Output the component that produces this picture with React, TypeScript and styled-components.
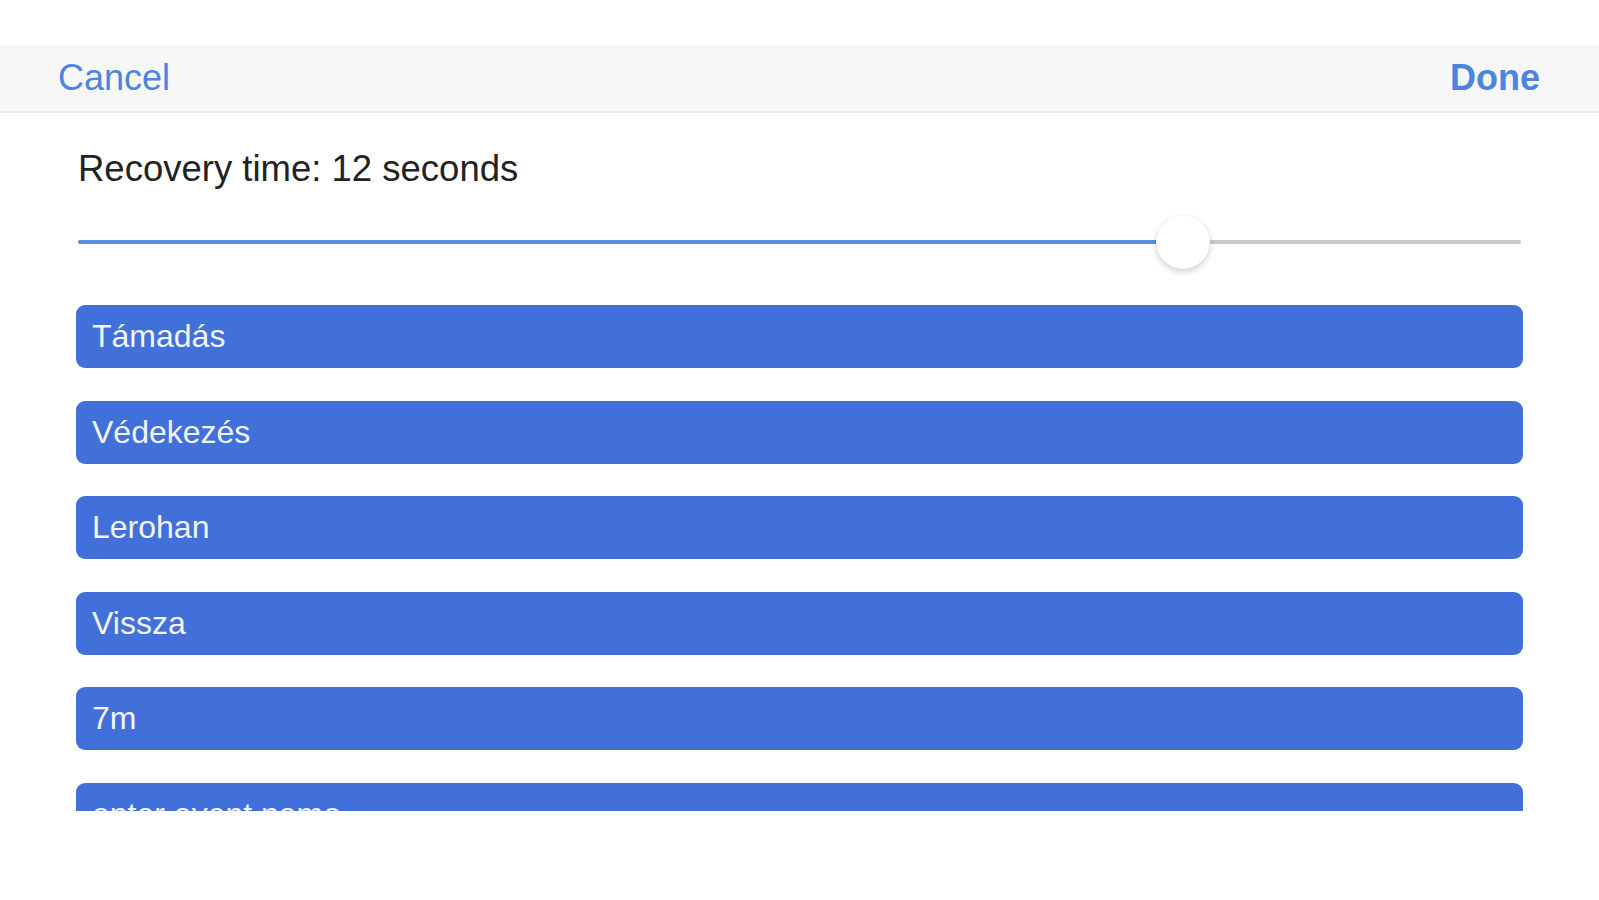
import React, { useState } from "react";
import styled, { createGlobalStyle } from "styled-components";

const GlobalStyle = createGlobalStyle`
    html, body {
        margin: 0;
        padding: 0;
        background: #ffffff;
        font-family: "Liberation Sans", Arial, sans-serif;
    }
`;

const Screen = styled.div`
    display: flex;
    flex-direction: column;
    width: 1599px;
    height: 900px;
    padding-top: 45px;
    box-sizing: border-box;
    background: #ffffff;
`;

const NavBar = styled.header`
    display: flex;
    align-items: center;
    justify-content: space-between;
    height: 66px;
    padding: 0 59px 0 58px;
    background: #f7f7f7;
    border-bottom: 2px solid #ececec;
`;

const NavButton = styled.button<{ $bold?: boolean }>`
    background: none;
    border: none;
    padding: 0;
    cursor: pointer;
    font-family: inherit;
    font-size: 36px;
    font-weight: ${(p) => (p.$bold ? 700 : 400)};
    color: #4a86e0;
`;

const Content = styled.main`
    display: flex;
    flex-direction: column;
    padding: 0 76px 0 76px;
`;

const Title = styled.h2`
    margin: 34px 0 0 2px;
    font-size: 36.5px;
    font-weight: 400;
    line-height: 44px;
    color: #222222;
`;

const SliderWrap = styled.div`
    position: relative;
    height: 56px;
    margin: 23px 2px 0 2px;
    display: flex;
    align-items: center;
`;

const Track = styled.div`
    width: 100%;
    height: 4px;
    border-radius: 2px;
    background: #c9c9c9;
`;

const Fill = styled.div`
    height: 100%;
    border-radius: 2px;
    background: #5b8fe3;
`;

const Thumb = styled.div`
    position: absolute;
    top: 1px;
    width: 54px;
    height: 54px;
    margin-left: -27px;
    border-radius: 50%;
    background: #ffffff;
    box-shadow: 0 3px 6px rgba(0, 0, 0, 0.18), 0 0 1px rgba(0, 0, 0, 0.12);
`;

const List = styled.div`
    display: flex;
    flex-direction: column;
    gap: 32.5px;
    margin-top: 35px;
    height: 506px;
    overflow: hidden;
`;

const EventButton = styled.button`
    flex-shrink: 0;
    display: flex;
    align-items: center;
    height: 63px;
    padding: 0 16px;
    border: none;
    border-radius: 9px;
    background: #4170da;
    color: #f2f5fc;
    font-family: inherit;
    font-size: 32px;
    text-align: left;
    cursor: pointer;
`;

const events = ["Támadás", "Védekezés", "Lerohan", "Vissza", "7m", "enter event name"];

export default function App() {
    const [seconds] = useState(12);
    const ratio = 0.766;

    return (
        <Screen>
            <GlobalStyle />
            <NavBar>
                <NavButton>Cancel</NavButton>
                <NavButton $bold>Done</NavButton>
            </NavBar>
            <Content>
                <Title>Recovery time: {seconds} seconds</Title>
                <SliderWrap>
                    <Track>
                        <Fill style={{ width: `${ratio * 100}%` }} />
                    </Track>
                    <Thumb style={{ left: `${ratio * 100}%` }} />
                </SliderWrap>
                <List>
                    {events.map((e) => (
                        <EventButton key={e}>{e}</EventButton>
                    ))}
                </List>
            </Content>
        </Screen>
    );
}
